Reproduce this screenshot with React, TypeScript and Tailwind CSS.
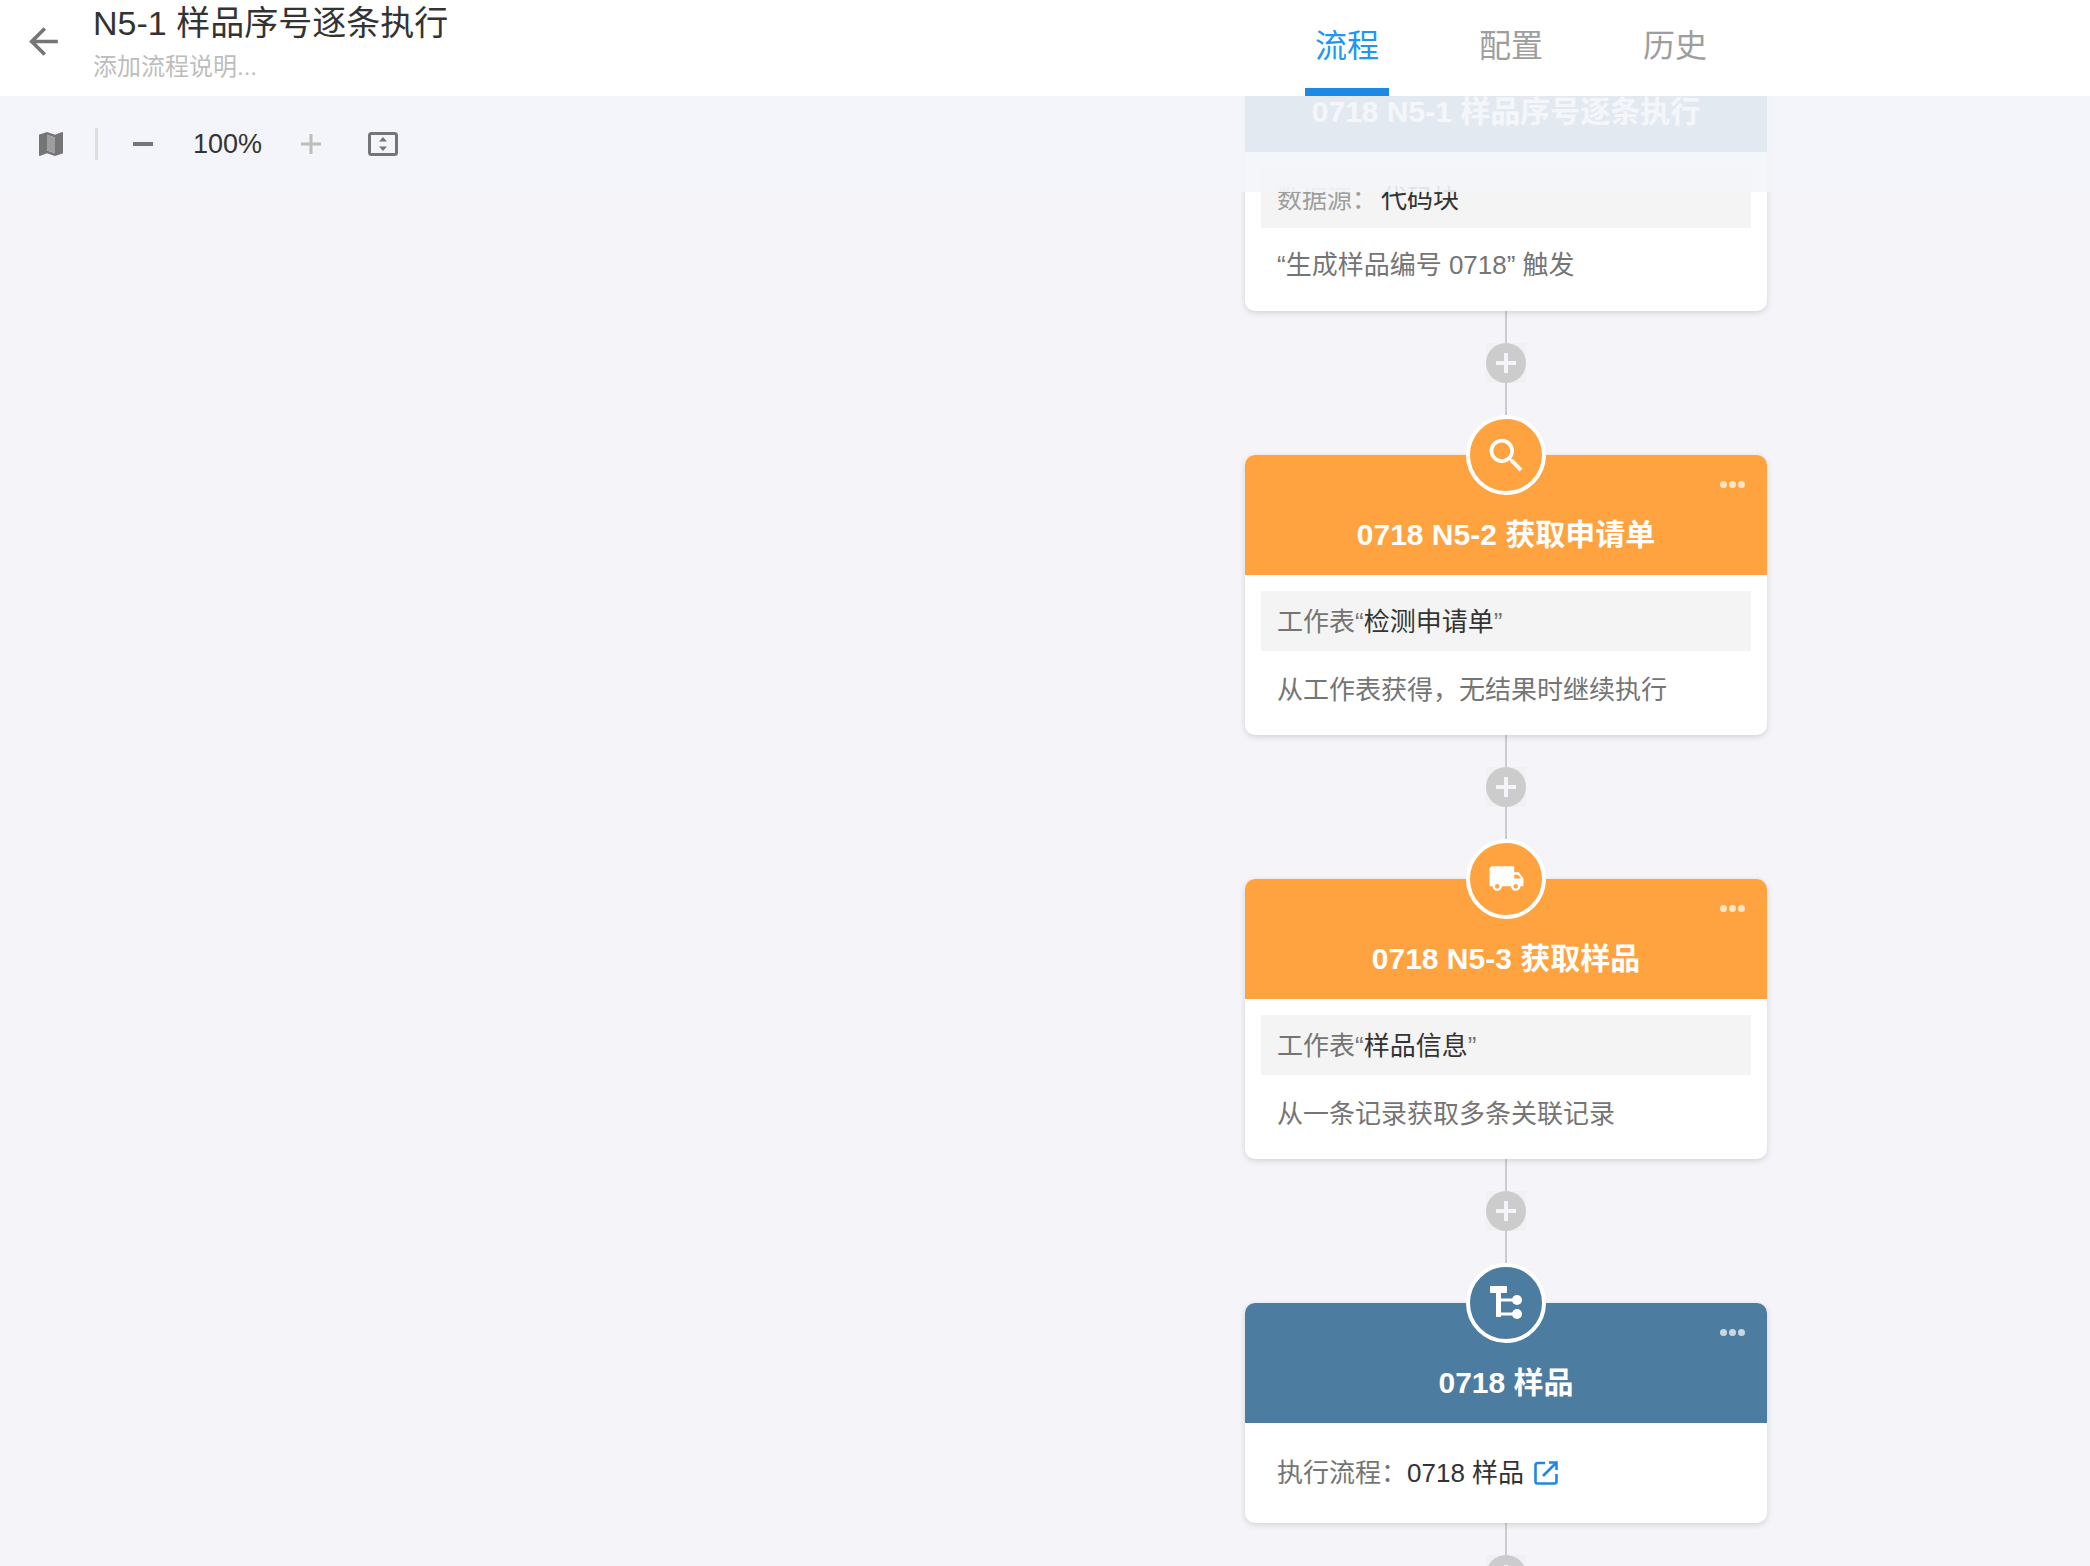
import { ReactNode } from "react";

const font = "font-['Liberation_Sans','Noto_Sans_CJK_SC',sans-serif]";

function Connector() {
  return (
    <div className="flex flex-col items-center mb-10">
      <div className="w-[2px] h-8 bg-[#ccc]" />
      <div className="w-10 h-10 bg-[#f1f1f3] flex items-center justify-center">
        <div className="w-10 h-10 rounded-full bg-[#ccc] relative flex items-center justify-center">
          <div className="absolute w-5 h-1 bg-[#f4f4f9]" />
          <div className="absolute w-1 h-5 bg-[#f4f4f9]" />
        </div>
      </div>
      <div className="w-[2px] h-8 bg-[#ccc]" />
    </div>
  );
}

function SearchIcon() {
  return (
    <svg width="45" height="45" viewBox="0 0 24 24" fill="#fff">
      <path d="M15.5 14h-.79l-.28-.27C15.41 12.59 16 11.11 16 9.5 16 5.91 13.09 3 9.5 3S3 5.91 3 9.5 5.91 16 9.5 16c1.61 0 3.09-.59 4.23-1.57l.27.28v.79l5 4.99L20.49 19l-4.99-5zm-6 0C7.01 14 5 11.99 5 9.5S7.01 5 9.5 5 14 7.01 14 9.5 11.99 14 9.5 14z" />
    </svg>
  );
}

function TruckIcon() {
  return (
    <svg width="37" height="37" viewBox="0 0 24 24" fill="#fff" className="-mt-[2px]">
      <path d="M20 8h-3V4H3c-1.1 0-2 .9-2 2v11h2c0 1.66 1.34 3 3 3s3-1.34 3-3h6c0 1.66 1.34 3 3 3s3-1.34 3-3h2v-5l-3-4zM6 18.5c-.83 0-1.5-.67-1.5-1.5s.67-1.5 1.5-1.5 1.5.67 1.5 1.5-.67 1.5-1.5 1.5zm13.5-9 1.96 2.5H17V9.5h2.5zm-1.5 9c-.83 0-1.5-.67-1.5-1.5s.67-1.5 1.5-1.5 1.5.67 1.5 1.5-.67 1.5-1.5 1.5z" />
    </svg>
  );
}

function BranchIcon() {
  return (
    <svg width="40" height="40" viewBox="0 0 40 40" fill="#fff">
      <rect x="4" y="3" width="17" height="7" rx="1" />
      <rect x="10" y="9" width="5" height="25" />
      <rect x="14" y="15.5" width="16" height="3" />
      <rect x="14" y="29.5" width="16" height="3" />
      <circle cx="31" cy="17" r="5" />
      <circle cx="31" cy="31" r="5" />
    </svg>
  );
}

function FlowCard({
  title,
  header,
  icon,
  children,
}: {
  title: string;
  header: string;
  icon?: ReactNode;
  children: ReactNode;
}) {
  return (
    <div className="relative bg-white rounded-[10px] shadow-[0_2px_6px_rgba(0,0,0,0.14)]">
      <div className={`h-[120px] rounded-t-[10px] pt-[60px] text-center text-white font-bold text-[30px] leading-10 ${header}`}>
        {title}
      </div>
      {icon && (
        <div className={`absolute -top-10 left-[221px] w-20 h-20 rounded-full border-4 border-white flex items-center justify-center ${header}`}>
          {icon}
        </div>
      )}
      {icon && (
        <div className="absolute top-[26px] right-[22px] flex gap-[2px]">
          <div className="w-[7px] h-[7px] rounded-full bg-white/70" />
          <div className="w-[7px] h-[7px] rounded-full bg-white/70" />
          <div className="w-[7px] h-[7px] rounded-full bg-white/70" />
        </div>
      )}
      {children}
    </div>
  );
}

function Body({ row, desc }: { row: ReactNode; desc: string }) {
  return (
    <div className="h-40 px-4 pt-4 text-[26px] text-[#757575]">
      <div className="h-[60px] bg-[#f4f4f4] px-4 pt-[2px] flex items-center">{row}</div>
      <div className="px-4 pt-[23px] leading-8">{desc}</div>
    </div>
  );
}

export default function App() {
  return (
    <div className={`relative h-screen overflow-hidden bg-[#f4f4f9] ${font}`}>
      <header className="relative z-20 h-24 bg-white flex justify-between">
        <div className="flex">
          <div className="w-[93px] flex items-start pt-5 pl-[22px]">
            <svg width="43" height="43" viewBox="0 0 24 24" fill="#757575">
              <path d="M20 11H7.83l5.59-5.59L12 4l-8 8 8 8 1.41-1.41L7.83 13H20v-2z" />
            </svg>
          </div>
          <div>
            <div className="text-[34px] leading-[46px] text-[#333]">N5-1 样品序号逐条执行</div>
            <div className="text-2xl leading-[42px] text-[#bdbdbd]">添加流程说明...</div>
          </div>
        </div>
        <nav className="flex gap-20 pr-[373px] text-[32px]">
          <div className="w-[84px] h-24 pt-[25px] leading-[42px] text-center text-[#2196f3] border-b-8 border-[#1e88e5]">流程</div>
          <div className="w-[84px] h-24 pt-[25px] leading-[42px] text-center text-[#9e9e9e]">配置</div>
          <div className="w-[84px] h-24 pt-[25px] leading-[42px] text-center text-[#9e9e9e]">历史</div>
        </nav>
      </header>

      <main className="-mt-[64px] ml-[1245px] w-[522px]">
        <FlowCard title="0718 N5-1 样品序号逐条执行" header="bg-[#4c7c9f]">
          <div className="h-[159px] px-4 pt-4 text-[26px] text-[#757575]">
            <div className="h-[60px] bg-[#f4f4f4] px-4 flex items-center pt-[3px]">
              <span className="text-[#9e9e9e] text-[25px] mr-[4px]">数据源：</span>
              <span className="text-[#333]">代码块</span>
            </div>
            <div className="px-4 pt-[21px] leading-8">“生成样品编号 0718” 触发</div>
          </div>
        </FlowCard>
        <Connector />
        <FlowCard title="0718 N5-2 获取申请单" header="bg-[#ffa340]" icon={<SearchIcon />}>
          <Body
            row={
              <>
                工作表“<span className="text-[#333]">检测申请单</span>”
              </>
            }
            desc="从工作表获得，无结果时继续执行"
          />
        </FlowCard>
        <Connector />
        <FlowCard title="0718 N5-3 获取样品" header="bg-[#ffa340]" icon={<TruckIcon />}>
          <Body
            row={
              <>
                工作表“<span className="text-[#333]">样品信息</span>”
              </>
            }
            desc="从一条记录获取多条关联记录"
          />
        </FlowCard>
        <Connector />
        <FlowCard title="0718 样品" header="bg-[#4c7c9f]" icon={<BranchIcon />}>
          <div className="h-[100px] px-8 flex items-center text-[26px] text-[#757575]">
            执行流程：
            <span className="text-[#333]">0718 样品</span>
            <svg width="24" height="24" viewBox="0 0 24 24" fill="none" stroke="#1e88e5" strokeWidth="2.6" className="ml-[10px]">
              <path d="M11 2H3.5A2 2 0 0 0 1.5 4v16.500a2 2 0 0 0 2 2H20.500a2 2 0 0 0 2-2V13" />
              <path d="M9 15 22 2" />
              <path d="M15 1.500h7.500V9" />
            </svg>
          </div>
        </FlowCard>
        <Connector />
      </main>

      <div className="absolute z-10 top-24 left-0 right-0 h-24 bg-[#f4f5f9]/90">
        <div className="flex items-center h-8 mt-8 text-[27px] text-[#333]">
          <svg width="32" height="32" viewBox="0 0 24 24" fill="#757575" className="ml-[35px]">
            <path d="M20.5 3l-.16.03L15 5.1 9 3 3.36 4.9c-.21.07-.36.25-.36.48V20.500c0 .28.22.5.5.5l.16-.03L9 18.9l6 2.100 5.640-1.900c.21-.07.36-.25.36-.48V3.500c0-.28-.22-.5-.5-.5zM15 19l-6-2.110V5l6 2.110V19z" />
            <path d="M9 5l6 2.110V19l-6-2.110z" fill="#9e9e9e" />
          </svg>
          <div className="w-[3px] h-8 bg-[#ddd] ml-[28px]" />
          <div className="w-5 h-1 bg-[#757575] ml-[35px]" />
          <div className="w-[69px] ml-[40px] text-center">100%</div>
          <svg width="20" height="20" viewBox="0 0 20 20" fill="#bdbdbd" className="ml-[39px]">
            <rect x="0" y="8.500" width="20" height="3" />
            <rect x="8.500" y="0" width="3" height="20" />
          </svg>
          <svg width="30" height="24" viewBox="0 0 30 24" fill="none" className="ml-[47px]">
            <rect x="1.500" y="1.500" width="27" height="21" rx="2" stroke="#757575" strokeWidth="3" />
            <path d="M15 5l4 4.500h-8zM15 19l-4-4.500h8z" fill="#757575" />
          </svg>
        </div>
      </div>
    </div>
  );
}
